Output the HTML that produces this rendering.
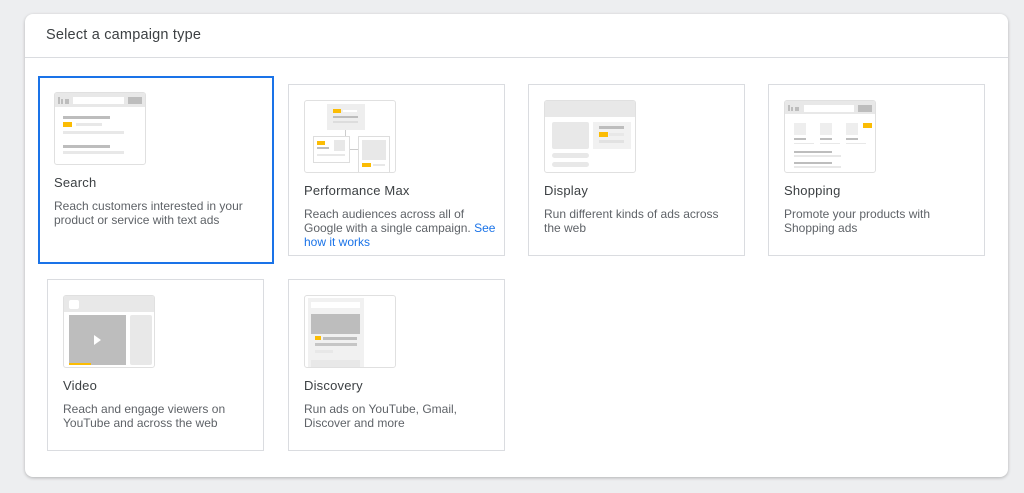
<!DOCTYPE html>
<html><head><meta charset="utf-8"><style>
*{margin:0;padding:0;box-sizing:border-box}
body{width:1024px;height:493px;background:#edeef0;font-family:"Liberation Sans",Arial,sans-serif;position:relative;overflow:hidden}
.main{position:absolute;left:25px;top:14px;width:983px;height:463px;background:#fff;border-radius:8px;box-shadow:0 1px 3px rgba(0,0,0,.25)}
.hdr{position:absolute;left:46px;top:27px;font-size:14.5px;color:#3c4043;letter-spacing:.2px}
.sep{position:absolute;left:25px;top:57px;width:983px;height:1px;background:#dadce0}
.card{position:absolute;width:217px;height:172px;border:1px solid #dadce0;background:#fff}
.card.sel{border:2px solid #1a73e8}
.il{position:absolute;left:15px;top:15px;width:92px;height:73px;border:1px solid #e0e0e0;border-radius:3px;background:#fff;overflow:hidden}
.sel .il{left:14px;top:14px}
.il div{position:absolute}
.t{position:absolute;left:15px;top:98px;font-size:13px;color:#3c4043;letter-spacing:.2px}
.d{position:absolute;left:15px;top:122px;width:205px;white-space:nowrap;font-size:12px;line-height:14px;color:#5f6368}
.sel .t{left:14px;top:97px}.sel .d{left:14px;top:121px}
.y{background:#fbbc04}.g{background:#bdbdbd}.l{background:#e8e8e8}
a{color:#1a73e8;text-decoration:none}
</style></head><body>
<div class="main"></div>
<div class="hdr">Select a campaign type</div>
<div class="sep"></div>

<div class="card sel" style="left:38px;top:76px;width:236px;height:188px">
 <div class="il">
  <div class="l" style="left:0;top:0;width:93px;height:14px"></div>
  <div class="g" style="left:3px;top:4px;width:2px;height:7px"></div><div class="g" style="left:6px;top:6px;width:2px;height:5px"></div><div class="g" style="left:10px;top:6px;width:4px;height:5px"></div>
  <div style="left:18px;top:4px;width:51px;height:7px;background:#fff"></div>
  <div class="g" style="left:73px;top:4px;width:14px;height:7px"></div>
  <div class="g" style="left:8px;top:23px;width:47px;height:3px"></div>
  <div class="y" style="left:8px;top:29px;width:9px;height:5px"></div>
  <div class="l" style="left:21px;top:30px;width:26px;height:3px"></div>
  <div class="l" style="left:8px;top:38px;width:61px;height:3px"></div>
  <div class="g" style="left:8px;top:52px;width:47px;height:3px"></div>
  <div class="l" style="left:8px;top:58px;width:61px;height:3px"></div>
 </div>
 <div class="t">Search</div>
 <div class="d">Reach customers interested in your<br>product or service with text ads</div>
</div>

<div class="card" style="left:288px;top:84px">
 <div class="il">
  <div style="left:22px;top:3px;width:38px;height:26px;background:#eee"></div>
  <div class="y" style="left:28px;top:8px;width:8px;height:4px"></div>
  <div class="l" style="left:38px;top:9px;width:14px;height:2px;background:#fff"></div>
  <div class="g" style="left:28px;top:15px;width:25px;height:2px"></div>
  <div class="l" style="left:28px;top:20px;width:25px;height:2px;background:#ddd"></div>
  <div class="l" style="left:40px;top:29px;width:1px;height:6px;background:#ccc"></div>
  <div style="left:8px;top:35px;width:37px;height:27px;border:1px solid #ddd"></div>
  <div class="y" style="left:12px;top:40px;width:8px;height:4px"></div>
  <div class="g" style="left:12px;top:46px;width:12px;height:2px"></div>
  <div class="l" style="left:29px;top:39px;width:11px;height:11px"></div>
  <div class="l" style="left:12px;top:53px;width:28px;height:2px"></div>
  <div style="left:45px;top:48px;width:8px;height:1px;background:#ccc"></div>
  <div style="left:53px;top:35px;width:32px;height:37px;border:1px solid #ddd"></div>
  <div class="l" style="left:57px;top:39px;width:24px;height:20px"></div>
  <div class="y" style="left:57px;top:62px;width:9px;height:4px"></div>
  <div class="l" style="left:68px;top:63px;width:12px;height:2px"></div>
 </div>
 <div class="t">Performance Max</div>
 <div class="d">Reach audiences across all of<br>Google with a single campaign. <a>See</a><br><a>how it works</a></div>
</div>

<div class="card" style="left:528px;top:84px">
 <div class="il">
  <div class="l" style="left:0;top:0;width:93px;height:16px"></div>
  <div class="l" style="left:7px;top:21px;width:37px;height:27px;border-radius:2px"></div>
  <div style="left:48px;top:21px;width:38px;height:27px;background:#f1f1f1"></div>
  <div class="g" style="left:54px;top:25px;width:25px;height:3px"></div>
  <div class="y" style="left:54px;top:31px;width:9px;height:5px"></div>
  <div class="l" style="left:64px;top:32px;width:15px;height:3px"></div>
  <div style="left:54px;top:39px;width:25px;height:3px;background:#e2e2e2"></div>
  <div class="l" style="left:7px;top:52px;width:37px;height:5px;border-radius:3px"></div>
  <div class="l" style="left:7px;top:61px;width:37px;height:5px;border-radius:3px"></div>
 </div>
 <div class="t">Display</div>
 <div class="d">Run different kinds of ads across<br>the web</div>
</div>

<div class="card" style="left:768px;top:84px">
 <div class="il">
  <div class="l" style="left:0;top:0;width:93px;height:13px"></div>
  <div class="g" style="left:3px;top:4px;width:2px;height:6px"></div><div class="g" style="left:6px;top:6px;width:2px;height:4px"></div><div class="g" style="left:10px;top:6px;width:4px;height:4px"></div>
  <div style="left:19px;top:4px;width:50px;height:7px;background:#fff"></div>
  <div class="g" style="left:73px;top:4px;width:14px;height:7px"></div>
  <div style="left:9px;top:22px;width:12px;height:12px;background:#eee"></div>
  <div style="left:35px;top:22px;width:12px;height:12px;background:#eee"></div>
  <div style="left:61px;top:22px;width:12px;height:12px;background:#eee"></div>
  <div class="y" style="left:78px;top:22px;width:9px;height:5px"></div>
  <div class="g" style="left:9px;top:37px;width:12px;height:2px"></div><div class="l" style="left:9px;top:42px;width:20px;height:1px"></div>
  <div class="g" style="left:35px;top:37px;width:12px;height:2px"></div><div class="l" style="left:35px;top:42px;width:20px;height:1px"></div>
  <div class="g" style="left:61px;top:37px;width:12px;height:2px"></div><div class="l" style="left:61px;top:42px;width:20px;height:1px"></div>
  <div class="g" style="left:9px;top:50px;width:38px;height:2px"></div><div class="l" style="left:9px;top:54px;width:47px;height:2px"></div>
  <div class="g" style="left:9px;top:61px;width:38px;height:2px"></div><div class="l" style="left:9px;top:65px;width:47px;height:2px"></div>
 </div>
 <div class="t">Shopping</div>
 <div class="d">Promote your products with<br>Shopping ads</div>
</div>

<div class="card" style="left:47px;top:279px">
 <div class="il">
  <div class="l" style="left:0;top:0;width:93px;height:16px"></div>
  <div style="left:5px;top:4px;width:10px;height:9px;background:#fff;border-radius:2px"></div>
  <div class="g" style="left:5px;top:19px;width:57px;height:50px"></div>
  <div style="left:30px;top:39px;width:0;height:0;border-left:7px solid #fff;border-top:5px solid transparent;border-bottom:5px solid transparent"></div>
  <div class="y" style="left:5px;top:67px;width:22px;height:2px"></div>
  <div class="l" style="left:66px;top:19px;width:22px;height:50px;border-radius:2px"></div>
 </div>
 <div class="t">Video</div>
 <div class="d">Reach and engage viewers on<br>YouTube and across the web</div>
</div>

<div class="card" style="left:288px;top:279px">
 <div class="il">
  <div style="left:3px;top:2px;width:56px;height:71px;background:#f1f1f1"></div>
  <div style="left:6px;top:6px;width:49px;height:6px;background:#fff"></div>
  <div class="g" style="left:6px;top:18px;width:49px;height:20px"></div>
  <div class="y" style="left:10px;top:40px;width:6px;height:4px"></div>
  <div class="g" style="left:18px;top:41px;width:34px;height:3px"></div>
  <div style="left:10px;top:47px;width:42px;height:3px;background:#c6c6c6"></div>
  <div class="l" style="left:10px;top:54px;width:18px;height:3px"></div>
  <div class="l" style="left:6px;top:64px;width:49px;height:7px"></div>
 </div>
 <div class="t">Discovery</div>
 <div class="d">Run ads on YouTube, Gmail,<br>Discover and more</div>
</div>
</body></html>
